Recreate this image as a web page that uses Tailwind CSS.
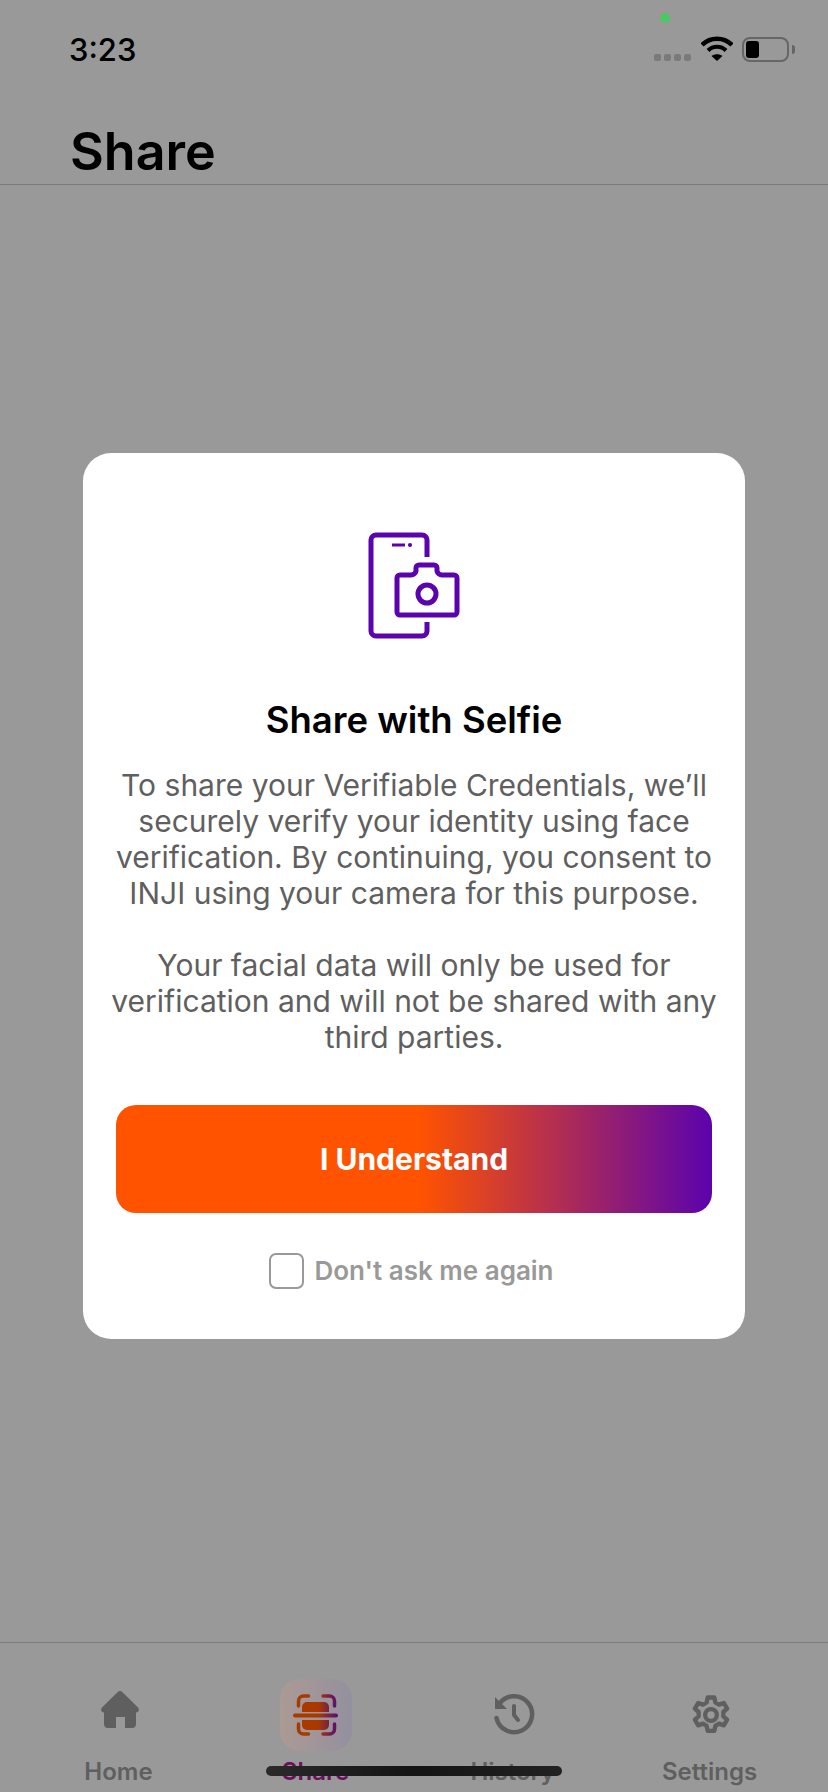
<!DOCTYPE html>
<html><head><meta charset="utf-8"><script src="https://cdn.jsdelivr.net/npm/@tailwindcss/browser@4"></script></head>
<body class="m-0">
<div class="relative w-[828px] h-[1792px] overflow-hidden bg-[#999999] flex flex-col font-['Inter',sans-serif]">
  <!-- status bar -->
  <div class="relative h-[96px] shrink-0 flex items-end justify-between pl-[69px] pr-[39px] pb-[28px]">
    <span class="absolute left-[660px] top-[13px] w-[10px] h-[10px] rounded-full bg-[#4cc764]"></span>
    <span class="text-[31px] leading-[36px] font-medium text-black">3:23</span>
    <div class="flex items-end">
      <div class="flex gap-[3px] mb-[7px] mr-[10px]">
        <span class="w-[7px] h-[7px] rounded-[2px] bg-[#7a7a7a]"></span><span class="w-[7px] h-[7px] rounded-[2px] bg-[#7a7a7a]"></span><span class="w-[7px] h-[7px] rounded-[2px] bg-[#7a7a7a]"></span><span class="w-[7px] h-[7px] rounded-[2px] bg-[#7a7a7a]"></span>
      </div>
      <svg class="w-[32px] h-[25px] mr-[9px] mb-[7px]" viewBox="0 0 32 25"><path d="M1 9C9 .5 23 .5 31 9" fill="none" stroke="#000" stroke-width="4.5"/><path d="M7 14.5c5-5 13-5 18 0" fill="none" stroke="#000" stroke-width="4"/><path d="M10.500 20 16 25l5.500-5c-3-2.500-8-2.500-11 0z" fill="#000"/></svg>
      <div class="relative w-[47px] h-[25px] rounded-[8px] border-2 border-[#666666] mb-[6px]">
        <span class="absolute left-[2px] top-[2px] w-[13px] h-[17px] rounded-[3px] bg-black"></span>
        <span class="absolute right-[-8px] top-[6px] w-[3px] h-[9px] rounded-r-[3px] bg-[#666666]"></span>
      </div>
    </div>
  </div>
  <!-- header -->
  <div class="h-[89px] shrink-0 border-b border-[#7a7a7a] pl-[70px] pt-[26px]">
    <h1 class="text-[52px] leading-[60px] font-semibold text-black">Share</h1>
  </div>
  <div class="flex-1"></div>
  <!-- tab bar -->
  <div class="h-[150px] shrink-0 border-t border-[#7d7d7d] px-[20px] grid grid-cols-4 text-[24px] leading-[30px] font-semibold text-[#5f5f5f]">
    <div class="flex flex-col items-center">
      <div class="h-[114px] flex items-start justify-center pt-[47px] pl-[3px]"><svg class="w-[40px] h-[40px]" viewBox="0 0 40 40"><path d="M17.500 2.200a3.500 3.500 0 0 1 5 0L38 17.500c1.800 2 .8 4.500-2 5V34a4 4 0 0 1-4 4h-7V27h-9v11H8a4 4 0 0 1-4-4V22.500c-2.800-.5-3.800-3-2-5z" fill="#5f5f5f"/></svg></div>
      <span>Home</span>
    </div>
    <div class="flex flex-col items-center text-[#6b0f5e]">
      <div class="h-[114px] flex items-start justify-center pt-[36px] pl-[1px]">
        <div class="w-[72px] h-[72px] rounded-[20px] bg-gradient-to-r from-[#ab9a94] to-[#94909f] flex items-center justify-center">
          <svg class="w-[46px] h-[42px]" viewBox="0 0 46 42" fill="none"><defs><linearGradient id="g" gradientUnits="userSpaceOnUse" x1="0" x2="46" y1="0" y2="0"><stop offset=".55" stop-color="#a83a00"/><stop offset="1" stop-color="#4f0a80"/></linearGradient></defs>
            <path d="M9 18v-5a5 5 0 0 1 5-5h17a5 5 0 0 1 5 5v5z" fill="url(#g)"/><path d="M9 26v5a5 5 0 0 0 5 5h17a5 5 0 0 0 5-5v-5z" fill="url(#g)"/>
            <rect x="0" y="19.500" width="45" height="4" rx="2" fill="url(#g)"/>
            <path d="M5.500 12V7a5 5 0 0 1 5-5h5M30 2h6.500a5 5 0 0 1 5 5v5M5.500 30v5a5 5 0 0 0 5 5h5M30 40h6.500a5 5 0 0 0 5-5v-5" stroke="url(#g)" stroke-width="3.500" stroke-linecap="round"/></svg>
        </div>
      </div>
      <span>Share</span>
    </div>
    <div class="flex flex-col items-center">
      <div class="h-[114px] flex items-start justify-center pt-[51px] pl-[3px]"><svg class="w-[42px] h-[42px]" viewBox="0 0 42 42" fill="none" stroke="#5f5f5f"><path d="M7 9A18 18 0 1 1 3.500 24" stroke-width="4.500" stroke-linecap="round"/><path d="M2 3v12h12z" fill="#5f5f5f" stroke="none"/><path d="M21 12v9l4 5" stroke-width="4" stroke-linecap="round" stroke-linejoin="round"/></svg></div>
      <span>History</span>
    </div>
    <div class="flex flex-col items-center">
      <div class="h-[114px] flex items-start justify-center pt-[52px] pl-[3px]"><svg class="w-[40px] h-[40px]" viewBox="0 0 24 24" fill="none" stroke="#5f5f5f" stroke-width="2.600" stroke-linejoin="round"><path d="M10 1.500h4l.6 3 2.200 1.300 2.900-1 2 3.400-2.300 2v2.600l2.300 2-2 3.400-2.900-1-2.200 1.300-.6 3h-4l-.6-3-2.200-1.300-2.900 1-2-3.400 2.300-2v-2.600l-2.300-2 2-3.400 2.900 1 2.200-1.300z"/><circle cx="12" cy="12" r="3.500"/></svg></div>
      <span>Settings</span>
    </div>
  </div>
  <!-- home indicator -->
  <div class="absolute left-[266px] top-[1766px] w-[296px] h-[10px] rounded-full bg-gradient-to-r from-[#2a2a2a] via-[#141414] to-[#222222]"></div>
  <!-- modal -->
  <div class="absolute inset-0 flex items-center justify-center">
    <div class="w-[662px] h-[886px] rounded-[28px] bg-white flex flex-col items-center pt-[75px] px-[33px]">
      <svg class="w-[100px] h-[112px] shrink-0" viewBox="0 0 100 112" fill="none" stroke="#5b03ad" stroke-width="5" stroke-linejoin="round" stroke-linecap="butt">
        <path d="M63 29V12a5 5 0 0 0-5-5H12a5 5 0 0 0-5 5v91a5 5 0 0 0 5 5h46a5 5 0 0 0 5-5v-9"/>
        <path d="M28 17h13" stroke-width="3"/><circle cx="46" cy="17" r="1.300" fill="#5b03ad" stroke-width="1.500"/>
        <path d="M33 50a3 3 0 0 1 3-3h11a5 5 0 0 0 5-4v-3a3 3 0 0 1 3-3h15a3 3 0 0 1 3 3v3a5 5 0 0 0 5 4h12a3 3 0 0 1 3 3v34a3 3 0 0 1-3 3H36a3 3 0 0 1-3-3z"/>
        <circle cx="63" cy="66" r="9"/>
      </svg>
      <h2 class="mt-[58px] text-[36.500px] leading-[44px] font-semibold text-black">Share with Selfie</h2>
      <p class="mt-[25px] text-[30px] leading-[36px] text-[#5f5f5f] text-center whitespace-nowrap">To share your Verifiable Credentials, we’ll<br>securely verify your identity using face<br>verification. By continuing, you consent to<br>INJI using your camera for this purpose.<br><br>Your facial data will only be used for<br>verification and will not be shared with any<br>third parties.</p>
      <button class="mt-[50px] w-[596px] h-[108px] shrink-0 rounded-[20px] bg-[linear-gradient(90deg,#ff5300_51%,#5b03ad_100%)] text-white text-[30px] font-bold">I Understand</button>
      <label class="mt-[40px] -ml-[5px] flex items-center gap-[10px]">
        <span class="w-[35px] h-[36px] rounded-[7px] border-2 border-[#999999] bg-white"></span>
        <span class="text-[26px] leading-[36px] font-semibold text-[#999999]">Don't ask me again</span>
      </label>
    </div>
  </div>
</div>
</body></html>
